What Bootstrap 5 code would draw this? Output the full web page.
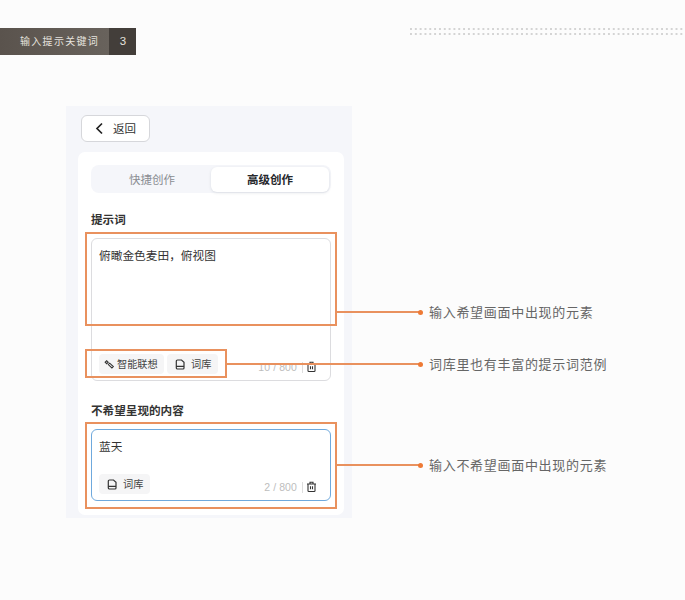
<!DOCTYPE html>
<html lang="zh">
<head>
<meta charset="utf-8">
<title>输入提示关键词</title>
<link rel="stylesheet" href="https://cdn.jsdelivr.net/npm/bootstrap@5.3.0/dist/css/bootstrap.min.css">
<style>
html,body{margin:0;height:600px;overflow:hidden}
body{background:#fcfcfc;font-family:"Noto Sans CJK SC","Liberation Sans",sans-serif;color:#333;position:relative}
.top-row{padding-top:28px;height:106px}
.strip-title{width:109px;height:27px;background:linear-gradient(90deg,#5a534d,#68625c);color:#e6e3df;font-size:10px;letter-spacing:1.3px;padding-left:20px;line-height:26px}
.strip-num{width:27px;height:27px;background:#433e3a;color:#e6e3df;font:11.5px/27px "Liberation Sans",sans-serif;text-align:center;padding-left:1px}
.dot-band{width:275px;height:8px;background-image:radial-gradient(circle at 1px 1px,#d4d4d4 0.9px,transparent 1.1px);background-size:4.83px 5px}
.panel{width:286px;height:412px;margin-left:66px;background:#f5f6fa;padding:9px 8px 0 12px}
.back-btn{width:69px;height:27px;padding:0;background:#fff;border:1px solid #d6d7db;border-radius:6px;font-size:11.5px;color:#333;gap:9px;margin-left:3px}
.back-btn:hover{background:#fff;color:#333;border-color:#d6d7db}
.form-card{width:266px;height:363px;margin-top:10px;border:0;border-radius:7px;background:#fff;padding:13px 13px 0}
.mode-tabs{height:28px;background:#f5f6fa;border-radius:8px;padding:2px}
.mode-tabs .nav-link{padding:0;height:25px;line-height:25px;font-size:11.5px;color:#8a8d92;border-radius:6px;text-align:center}
.mode-tabs .nav-link.active{background:#fff;color:#26282c;font-weight:700;box-shadow:0 1px 3px rgba(60,70,90,.14)}
.field-title{font-size:11.6px;font-weight:700;color:#333;line-height:16px;margin:0}
.title-one{margin-top:18px}
.title-two{margin-top:21px}
.prompt-box{width:240px;border:1px solid #dcdcdf;border-radius:6px;margin-top:11px;padding:7px 7px 6px;background:#fff}
.box-one{height:143px}
.box-two{height:72px;border-color:#6fa9dd;margin-top:11px}
.prompt-text{font-size:11.7px;line-height:18px;color:#333}
.chip{height:20px;padding:0 6px;border:0;border-radius:4px;background:#f5f5f6;color:#444;font-size:10.2px;gap:2px}
.chip:hover{background:#f5f5f6;color:#444}
.chip-row{gap:3px}
.chip-wide{width:65px;padding:0 5px}
.chip-lib{width:51px;gap:6px;padding:0 0 0 8px}
.tool-group{padding-right:6px;margin-bottom:1px}
.counter{font:10.5px/12px "Liberation Sans",sans-serif;color:#bdbdbd;letter-spacing:.1px;margin-right:5px}
.count-sep{width:1px;height:11px;background:#ddd;margin:0 3px 0 0}
.mark-box{position:absolute;border:2px solid #e9915e;pointer-events:none}
.lead-line{position:absolute;height:2px;background:#e9915e}
.lead-dot{position:absolute;width:5px;height:5px;border-radius:50%;background:#ee7a35}
.note{position:absolute;left:429px;font-size:13px;letter-spacing:.7px;line-height:18px;color:#666;white-space:nowrap}
</style>
</head>
<body>
<div class="top-row d-flex justify-content-between align-items-start">
  <div class="d-flex">
    <div class="strip-title">输入提示关键词</div>
    <div class="strip-num">3</div>
  </div>
  <div class="dot-band"></div>
</div>

<div class="panel">
  <button class="btn back-btn d-flex align-items-center justify-content-center" type="button">
    <svg width="9" height="13" viewBox="0 0 9 13" fill="none" stroke="#222" stroke-width="1.7"><path d="M7 1.5 2 6.5l5 5"/></svg>
    <span>返回</span>
  </button>
  <div class="card form-card">
    <ul class="nav mode-tabs">
      <li class="nav-item flex-fill"><a class="nav-link" href="#">快捷创作</a></li>
      <li class="nav-item flex-fill"><a class="nav-link active" href="#">高级创作</a></li>
    </ul>
    <p class="field-title title-one">提示词</p>
    <div class="prompt-box box-one d-flex flex-column justify-content-between">
      <div class="prompt-text">俯瞰金色麦田，俯视图</div>
      <div class="d-flex align-items-end justify-content-between">
        <div class="d-flex chip-row">
          <button class="btn chip chip-wide d-flex align-items-center" type="button">
            <svg width="11" height="11" viewBox="0 0 11 11" fill="none" stroke="#333" stroke-width="1.1"><path d="M1.2 3.2 2.7 1.7l1.5 1.5-1.5 1.5zM4.3 5.6l1.4-1.4 3.6 3.3L7.9 9z"/></svg>
            <span>智能联想</span>
          </button>
          <button class="btn chip chip-lib d-flex align-items-center" type="button">
            <svg width="10" height="11" viewBox="0 0 10 11" fill="none" stroke="#333" stroke-width="1.2"><path d="M2.5 1h4L9 3.2V9a1 1 0 0 1-1 1H2.5a1.2 1.2 0 0 1-1.2-1.2V2.2A1.2 1.2 0 0 1 2.5 1zM1.5 7.4H9"/></svg>
            <span>词库</span>
          </button>
        </div>
        <div class="tool-group d-flex align-items-center">
          <span class="counter">10 / 800</span><span class="count-sep"></span>
          <svg width="11" height="12" viewBox="0 0 11 12" fill="none" stroke="#333" stroke-width="1.1"><path d="M1 3h9M4 3V1.3h3V3M2 3v6.7q0 .8.8.8h5.4q.8 0 .8-.8V3M4.5 5.2v3M6.5 5.2v3"/></svg>
        </div>
      </div>
    </div>
    <p class="field-title title-two">不希望呈现的内容</p>
    <div class="prompt-box box-two d-flex flex-column justify-content-between">
      <div class="prompt-text">蓝天</div>
      <div class="d-flex align-items-end justify-content-between">
        <button class="btn chip chip-lib d-flex align-items-center" type="button">
          <svg width="10" height="11" viewBox="0 0 10 11" fill="none" stroke="#333" stroke-width="1.2"><path d="M2.5 1h4L9 3.2V9a1 1 0 0 1-1 1H2.5a1.2 1.2 0 0 1-1.2-1.2V2.2A1.2 1.2 0 0 1 2.5 1zM1.5 7.4H9"/></svg>
          <span>词库</span>
        </button>
        <div class="tool-group d-flex align-items-center">
          <span class="counter">2 / 800</span><span class="count-sep"></span>
          <svg width="11" height="12" viewBox="0 0 11 12" fill="none" stroke="#333" stroke-width="1.1"><path d="M1 3h9M4 3V1.3h3V3M2 3v6.7q0 .8.8.8h5.4q.8 0 .8-.8V3M4.5 5.2v3M6.5 5.2v3"/></svg>
        </div>
      </div>
    </div>
  </div>
</div>

<div class="mark-box" style="left:85px;top:232px;width:252px;height:94px"></div>
<div class="mark-box" style="left:85px;top:349px;width:142px;height:29px"></div>
<div class="mark-box" style="left:85px;top:422px;width:252px;height:87px"></div>
<div class="lead-line" style="left:337px;top:311px;width:82px"></div>
<div class="lead-line" style="left:227px;top:363px;width:192px"></div>
<div class="lead-line" style="left:337px;top:464px;width:82px"></div>
<div class="lead-dot" style="left:418px;top:309.5px"></div>
<div class="lead-dot" style="left:418px;top:361.5px"></div>
<div class="lead-dot" style="left:418px;top:462.5px"></div>
<div class="note" style="top:303px">输入希望画面中出现的元素</div>
<div class="note" style="top:355px">词库里也有丰富的提示词范例</div>
<div class="note" style="top:456px">输入不希望画面中出现的元素</div>
<script src="https://cdn.jsdelivr.net/npm/bootstrap@5.3.0/dist/js/bootstrap.bundle.min.js"></script>
</body>
</html>
